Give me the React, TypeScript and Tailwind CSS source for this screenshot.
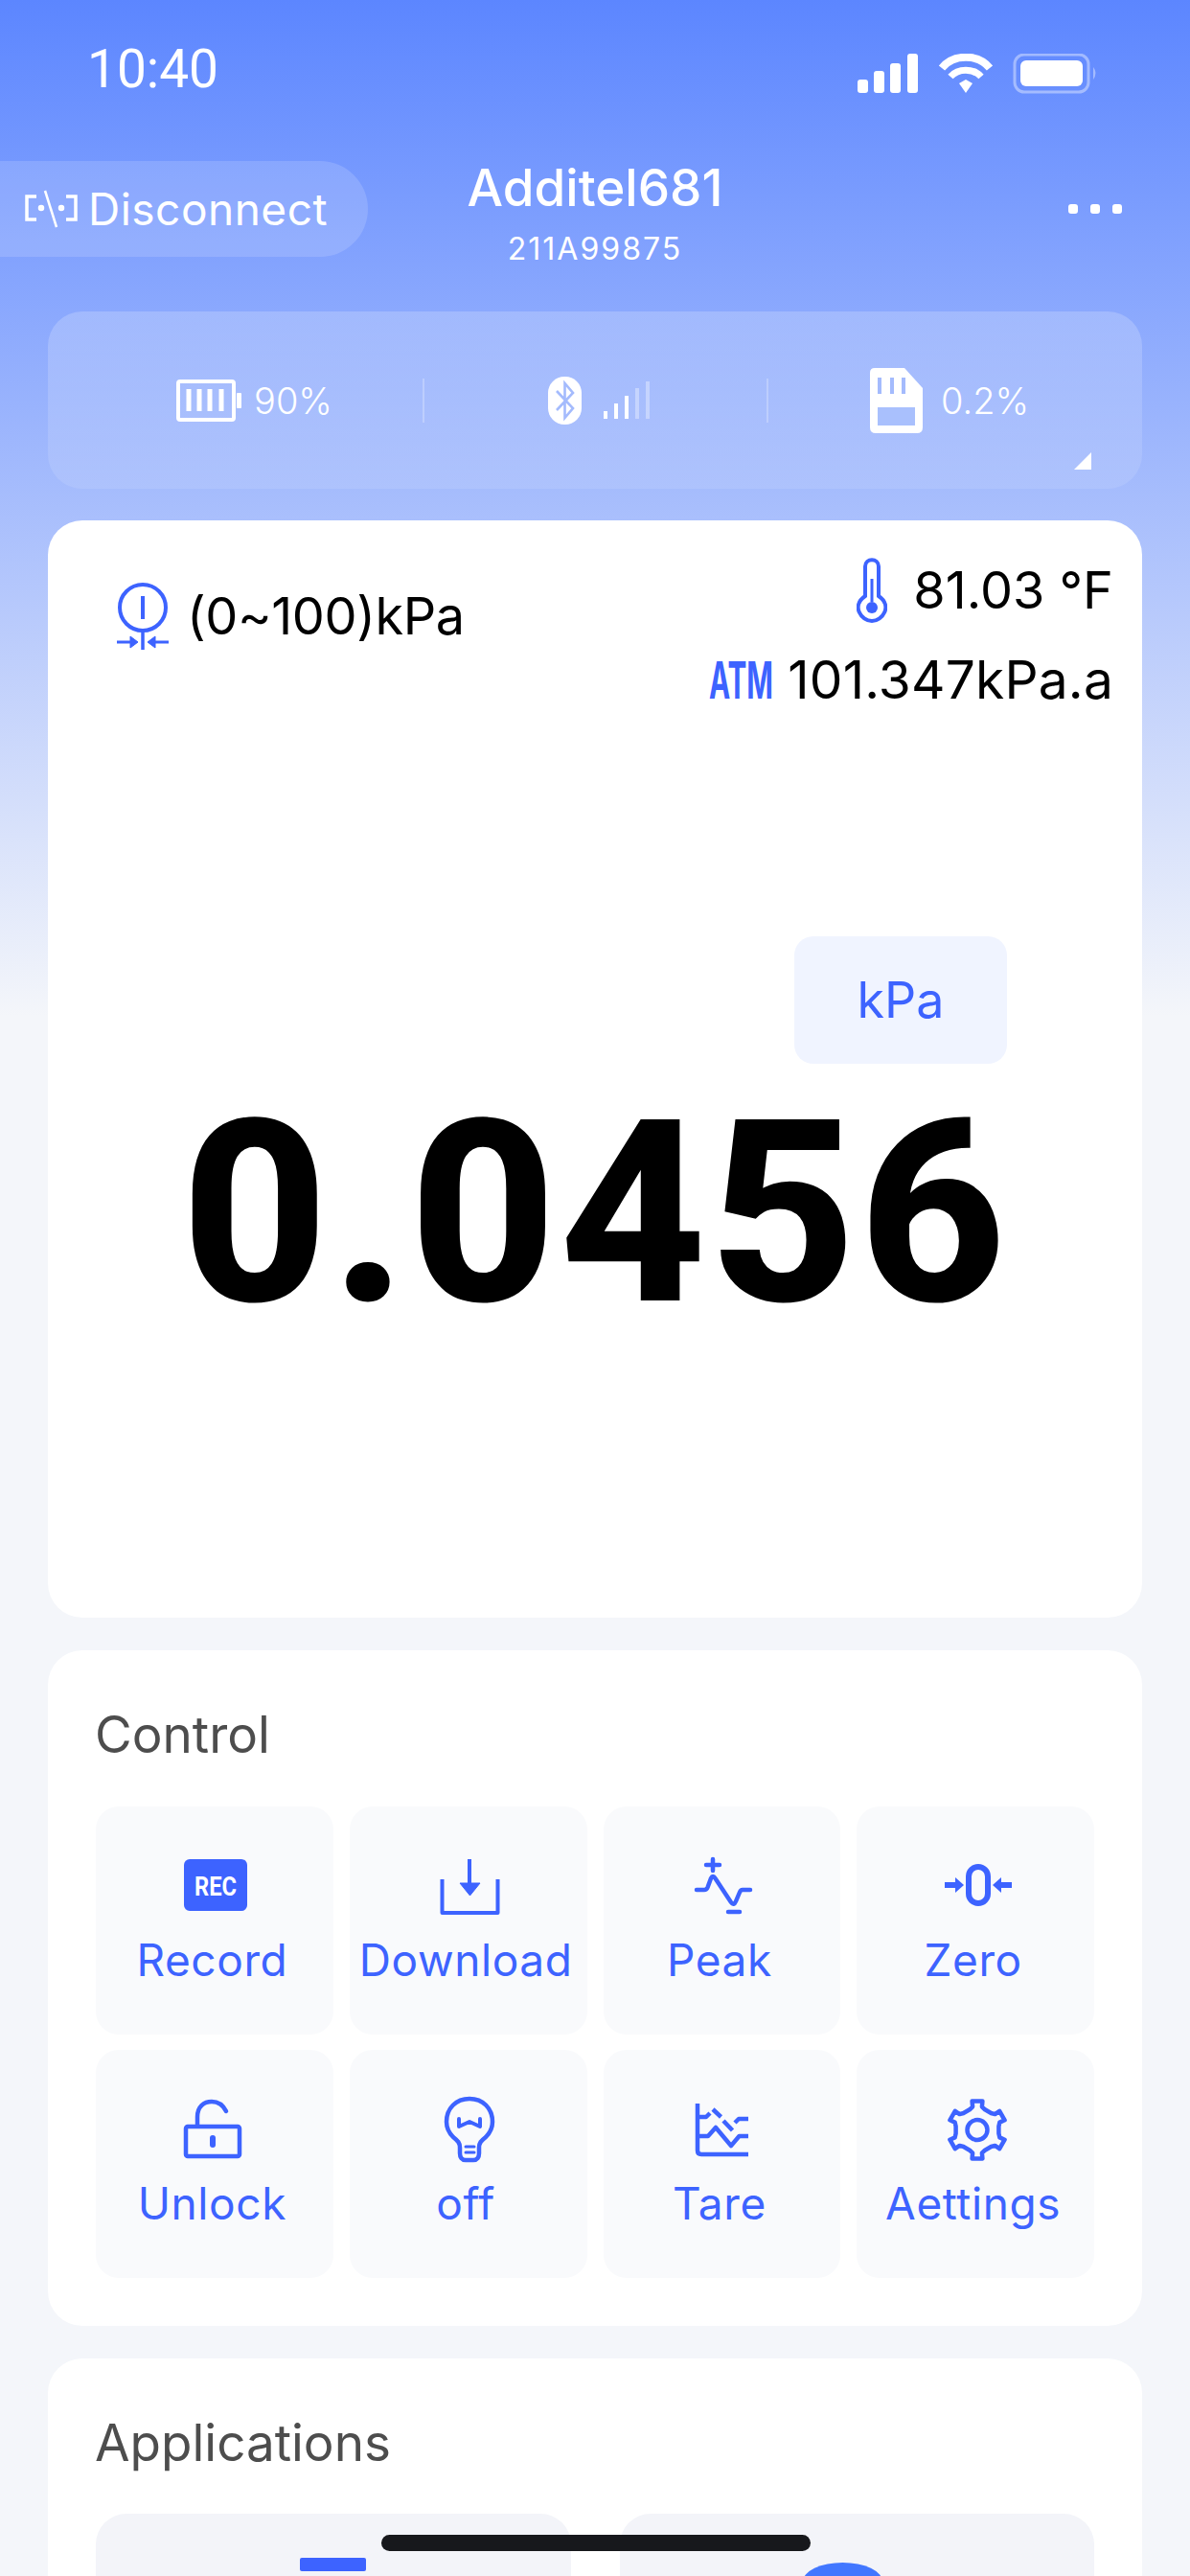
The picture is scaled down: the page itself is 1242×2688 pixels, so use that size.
const blue = "#3d63ff";

function gearPath() {
  const cx = 38;
  const cy = 35.5;
  let d = "";
  for (let i = 0; i < 6; i++) {
    const a = ((-90 + i * 60) * Math.PI) / 180;
    const pts: [number, number][] = [
      [-0.36, 22],
      [-0.2, 24],
      [-0.18, 29.5],
      [0.18, 29.5],
      [0.2, 24],
      [0.36, 22],
    ];
    pts.forEach(([off, r]) => {
      const x = cx + Math.cos(a + off) * r * 1.03;
      const y = cy + Math.sin(a + off) * r * 1.03;
      d += `${d ? "L" : "M"}${x.toFixed(1)} ${y.toFixed(1)} `;
    });
  }
  return d + "Z";
}

const controls = [
  {
    label: "Record",
    icon: (
      <>
        <rect x="4" y="7" width="66" height="54" rx="6" fill={blue} />
        <text x="37" y="45" textAnchor="middle" fontSize="28" fontWeight="700" fill="#fff" textLength="44" lengthAdjust="spacingAndGlyphs" fontFamily="Roboto, sans-serif">
          REC
        </text>
      </>
    ),
  },
  {
    label: "Download",
    icon: (
      <>
        <path d="M8.5 28V63H66.5V28" fill="none" stroke={blue} strokeWidth="4" strokeLinejoin="round" />
        <path d="M37 7V36" fill="none" stroke={blue} strokeWidth="4" />
        <path d="M27 32H48L37.5 45Z" fill={blue} stroke={blue} strokeLinejoin="round" />
      </>
    ),
  },
  {
    label: "Peak",
    icon: (
      <g fill="none" stroke={blue} strokeWidth="4.5" strokeLinecap="round" strokeLinejoin="round">
        <path d="M27 7V19M20 13H34" />
        <path d="M10 39H18Q20.5 39 21.5 36.5L25 27Q27 23 29.5 27L46 52Q49 56 51 51L55 41.5Q56 39 58 39H66" />
        <path d="M43 62H55" />
      </g>
    ),
  },
  {
    label: "Zero",
    icon: (
      <g transform="translate(3 0)">
        <rect x="26" y="15" width="20" height="38" rx="10" fill="none" stroke={blue} strokeWidth="6" />
        <path d="M1 31H12V26L21 34L12 42V37H1Z" fill={blue} />
        <path d="M71 31H60V26L51 34L60 42V37H71Z" fill={blue} />
      </g>
    ),
  },
  {
    label: "Unlock",
    icon: (
      <g fill="none" stroke={blue} strokeWidth="4.5" strokeLinecap="round" strokeLinejoin="round">
        <rect x="6" y="32" width="56" height="31" rx="2" />
        <path d="M18 30V22C18 11 25 6 33 6C40 6 45 10 48 16" />
        <path d="M34 44V51" strokeWidth="6" />
      </g>
    ),
  },
  {
    label: "off",
    icon: (
      <g fill="none" stroke={blue} strokeWidth="4.5" strokeLinecap="round" strokeLinejoin="round">
        <path d="M37 3C23 3 13 13 13 27C13 34 16 39 20 43C25 47 27 49 27 54V60C27 64 29 67 33 67H41C45 67 47 64 47 60V54C47 49 49 47 54 43C58 39 61 34 61 27C61 13 51 3 37 3Z" />
        <path d="M26 24V32L37 27L48 32V24" strokeWidth="4" />
        <path d="M33 53H42M33 59H42" strokeWidth="3" />
      </g>
    ),
  },
  {
    label: "Tare",
    icon: (
      <g fill="none" stroke={blue} strokeWidth="4.5" strokeLinejoin="round">
        <path d="M11 8V57Q11 61 15 61H64" />
        <path d="M11 42H22L30 33L46 52L54.5 42H64" />
        <path d="M11 22H20L24 18M27 14L35.5 22M38 26L47.5 36M50 28L54 24H64" />
      </g>
    ),
  },
  {
    label: "Aettings",
    icon: (
      <g fill="none" stroke={blue} strokeWidth="4.5" strokeLinejoin="round">
        <path d={gearPath()} />
        <circle cx="38" cy="35.5" r="10.5" />
      </g>
    ),
  },
];

function BatteryIcon() {
  return (
    <svg width="68" height="44" viewBox="0 0 68 44" className="shrink-0">
      <rect x="2" y="2" width="58" height="40" rx="2" fill="none" stroke="#fff" strokeWidth="4" />
      <rect x="63" y="14" width="5" height="16" rx="1" fill="#fff" />
      <path d="M13 10V33M24 10V33M35 10V33M47 10V33" stroke="#fff" strokeWidth="5" />
    </svg>
  );
}

function BluetoothIcon() {
  return (
    <svg width="107" height="50" viewBox="0 0 107 50" className="shrink-0">
      <rect x="0" y="0" width="35" height="50" rx="17" fill="#fff" />
      <path d="M9 15L26 33L17.5 43V7L26 17L9 35" fill="none" stroke="#a4bbfd" strokeWidth="2.6" />
      <path d="M60 44V36M71 44V28M82 44V20" stroke="#fff" strokeWidth="4" />
      <path d="M93 44V12M104 44V5" stroke="#fff" strokeOpacity="0.35" strokeWidth="4" />
    </svg>
  );
}

function CardIcon() {
  return (
    <svg width="55" height="68" viewBox="0 0 55 68" className="shrink-0">
      <path d="M5 0H36L55 21V62Q55 68 49 68H6Q0 68 0 62V5Q0 0 5 0Z" fill="#fff" />
      <path d="M10 10V27M23 10V27M35 10V27" stroke="#a4bbfd" strokeWidth="4" />
      <rect x="8" y="41" width="39" height="19" fill="#a9c0fd" />
    </svg>
  );
}

export default function App() {
  return (
    <div
      className="relative h-[2688px] w-[1242px] overflow-hidden bg-[linear-gradient(180deg,#5c86ff_0,#f4f6fa_1060px)] text-black"
      style={{ fontFamily: "Inter, sans-serif" }}
    >
      {/* Status bar */}
      <div className="flex h-[168px] items-start justify-between pl-[91px] pr-[95px] pt-[56px]">
        <span className="font-['Roboto'] text-[55px] leading-[30px] pt-[1px] text-white">10:40</span>
        <svg width="252" height="42" viewBox="0 0 252 42">
          <g fill="#fff">
            <rect x="0" y="27" width="11" height="14" rx="3" />
            <rect x="17" y="18" width="11" height="23" rx="3" />
            <rect x="34" y="10" width="11" height="31" rx="3" />
            <rect x="52" y="0" width="11" height="41" rx="3" />
          </g>
          <path d="M88 15C100 0 126 0 138 15" fill="none" stroke="#fff" strokeWidth="8" />
          <path d="M97 24C105 15 121 15 129 24" fill="none" stroke="#fff" strokeWidth="7" />
          <path d="M106 31L113 27L120 31L113 41Z" fill="#fff" />
          <rect x="164" y="1" width="77" height="39" rx="10" fill="none" stroke="#fff" strokeOpacity="0.4" strokeWidth="3" />
          <rect x="170" y="7" width="65" height="27" rx="6" fill="#fff" />
          <path d="M246 14Q251 20 246 27Z" fill="#fff" fillOpacity="0.4" />
        </svg>
      </div>

      {/* Header */}
      <div className="grid h-[100px] grid-cols-[1fr_auto_1fr] items-start">
        <div className="flex h-[100px] w-[384px] items-center gap-[11px] rounded-r-[50px] bg-white/15 pl-[26px]">
          <svg width="55" height="40" viewBox="0 0 55 40" fill="none" stroke="#fff" strokeWidth="3.5">
            <path d="M12 7H2V31H12M43 7H53V31H43" />
            <path d="M21 1L33 39" strokeWidth="2.5" />
            <circle cx="17" cy="19" r="1.5" />
            <circle cx="38" cy="19" r="1.5" />
          </svg>
          <span className="text-[46px] leading-none tracking-[0.5px] text-white">Disconnect</span>
        </div>
        <div className="flex flex-col items-center text-white">
          <span className="text-[53px] font-medium leading-[56px]">Additel681</span>
          <span className="mt-[20px] text-[32px] leading-[32px] tracking-[2px]">211A99875</span>
        </div>
        <div className="flex justify-end gap-[13px] pr-[71px] pt-[45px]">
          <span className="h-[10px] w-[10px] rounded-[3px] bg-white" />
          <span className="h-[10px] w-[10px] rounded-[3px] bg-white" />
          <span className="h-[10px] w-[10px] rounded-[3px] bg-white" />
        </div>
      </div>

      {/* Device status */}
      <div className="relative mx-[50px] mt-[57px] flex h-[185px] items-center rounded-[36px] bg-linear-to-b from-white/20 to-white/10 text-white">
        <div className="flex w-[391px] items-center justify-center gap-[13px] pl-[40px]">
          <BatteryIcon />
          <span className="text-[38px] font-light leading-none">90%</span>
        </div>
        <div className="h-[46px] w-[2px] bg-white/25" />
        <div className="flex w-[357px] items-center justify-center pl-[8px]">
          <BluetoothIcon />
        </div>
        <div className="h-[46px] w-[2px] bg-white/25" />
        <div className="flex flex-1 items-center justify-center gap-[19px] pr-[12px]">
          <CardIcon />
          <span className="text-[38px] font-light leading-none">0.2%</span>
        </div>
        <svg width="18" height="18" viewBox="0 0 18 18" className="absolute bottom-[20px] right-[53px]">
          <path d="M18 0V18H0Z" fill="#fff" />
        </svg>
      </div>

      {/* Reading */}
      <div className="mx-[50px] mt-[33px] h-[1145px] rounded-[36px] bg-white">
        <div className="flex h-[434px] items-start justify-between pr-[30px]">
          <div className="ml-[72px] mt-[65px] flex items-center gap-[19px]">
            <svg width="54" height="70" viewBox="0 0 54 70" fill="none" stroke={blue}>
              <circle cx="27" cy="26" r="24" strokeWidth="4" />
              <path d="M27 14V38" strokeWidth="4" />
              <path d="M27 50V70" strokeWidth="3.5" />
              <path d="M0 62H20M54 62H34" strokeWidth="3" />
              <path d="M14 56L22 62L14 68ZM40 56L32 62L40 68Z" fill={blue} strokeWidth="1" />
            </svg>
            <span className="text-[54px] leading-none tracking-[-0.4px]">(0~100)kPa</span>
          </div>
          <div className="flex flex-col items-end pt-[39px]">
            <div className="flex items-center gap-[27px]">
              <svg width="32" height="68" viewBox="0 0 32 68" fill="none" stroke={blue} strokeWidth="4">
                <path d="M9 40V9C9 0 23 0 23 9V40C38 50 27 66 16 66C5 66 -6 50 9 40Z" />
                <path d="M16 22V46" strokeWidth="3" />
                <circle cx="16" cy="52" r="6" fill={blue} stroke="none" />
              </svg>
              <span className="text-[54px] leading-none">81.03 °F</span>
            </div>
            <div className="mt-[32px] flex items-center gap-[16px]">
              <span className="w-[66px] text-[54px] font-bold leading-none text-[#3d63ff]">
                <span className="inline-block origin-left scale-x-[0.55]">ATM</span>
              </span>
              <span className="text-[55px] leading-none tracking-[0.2px]">101.347kPa.a</span>
            </div>
          </div>
        </div>
        <div className="ml-[779px] flex h-[133px] w-[222px] items-center justify-center rounded-[20px] bg-[#f0f4ff] text-[52px] text-[#3d63ff]">
          kPa
        </div>
        <div className="mt-[56px] text-center font-['Roboto'] text-[266px] font-extrabold leading-[200px] tracking-[3px]">
          0.0456
        </div>
      </div>

      {/* Control */}
      <div className="mx-[50px] mt-[34px] h-[705px] rounded-[36px] bg-white px-[50px] pt-[60px]">
        <div className="text-[53px] leading-[56px] text-[#4d4d4d] -ml-[1px]">Control</div>
        <div className="mt-[47px] grid grid-cols-4 gap-x-[17px] gap-y-[16px]">
          {controls.map((c) => (
            <div key={c.label} className="flex h-[238px] flex-col items-center rounded-[24px] bg-[#f9fafc] pt-[48px]">
              <svg width="72" height="72" viewBox="0 0 72 72" className="overflow-visible">
                {c.icon}
              </svg>
              <span className="mr-[5px] mt-[11px] text-[46px] leading-[58px] tracking-[0.6px] text-[#3d63ff]">{c.label}</span>
            </div>
          ))}
        </div>
      </div>

      {/* Applications */}
      <div className="mx-[50px] mt-[34px] rounded-[36px] bg-white px-[50px] pt-[60px]">
        <div className="text-[53px] leading-[56px] text-[#4d4d4d] -ml-[1px]">Applications</div>
        <div className="mt-[46px] grid grid-cols-2 gap-[51px]">
          <div className="flex h-[300px] justify-center rounded-[32px] bg-[#f3f4f9] pt-[46px]">
            <div className="h-[14px] w-[69px] rounded-[2px] bg-[#3d63ff]" />
          </div>
          <div className="flex h-[300px] justify-center rounded-[32px] bg-[#f3f4f9] pr-[30px] pt-[51px]">
            <div className="h-[40px] w-[83px] rounded-[50%] bg-[#4277ff]" />
          </div>
        </div>
      </div>

      {/* Home indicator */}
      <div className="absolute left-[398px] top-[2645px] h-[17px] w-[448px] rounded-full bg-[#17181c]" />
    </div>
  );
}
